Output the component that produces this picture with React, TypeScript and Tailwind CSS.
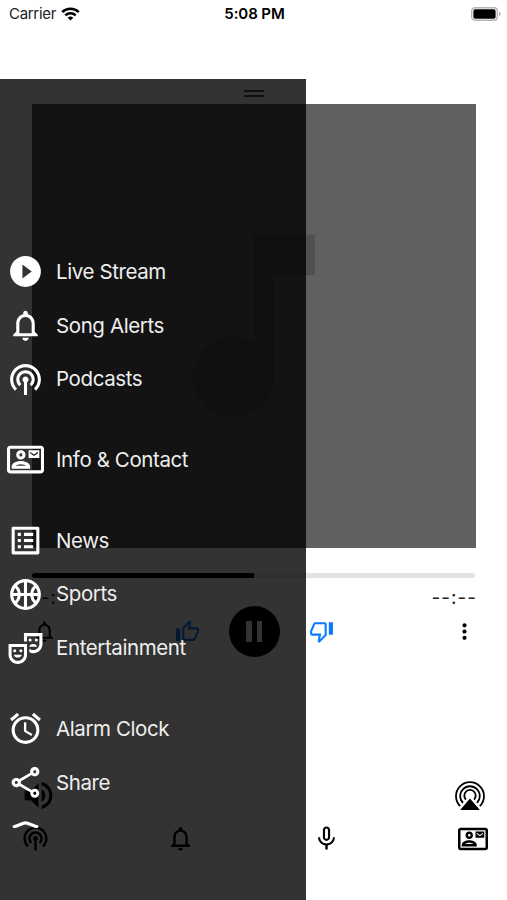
import type { ComponentType } from "react";
import {
  MdAccessAlarm,
  MdMicNone,
  MdMoreVert,
  MdMusicNote,
  MdNotificationsNone,
  MdOutlineListAlt,
  MdOutlineShare,
  MdOutlineSportsBasketball,
  MdOutlineTheaterComedy,
  MdPlayCircleFilled,
  MdPodcasts,
  MdVolumeUp,
} from "react-icons/md";

interface IconProps {
  size?: number;
  className?: string;
}

interface MenuItem {
  label: string;
  icon: ComponentType<IconProps>;
}

function ContactCardIcon({ size = 24, className }: IconProps) {
  return (
    <svg width={size} height={size} viewBox="0 0 24 24" fill="currentColor" className={className}>
      <path d="M22 3H2C.9 3 0 3.9 0 5v14c0 1.1.9 2 2 2h20c1.1 0 2-.9 2-2V5c0-1.1-.9-2-2-2m0 16H2V5h20v14M21 6h-7v5h7V6m-1 2l-2.5 1.75L15 8V7l2.5 1.75L20 7v1M9 12c1.65 0 3-1.35 3-3s-1.35-3-3-3-3 1.35-3 3 1.35 3 3 3m0-4c.55 0 1 .45 1 1s-.45 1-1 1-1-.45-1-1 .45-1 1-1m6 8.59c0-2.5-3.97-3.58-6-3.58s-6 1.08-6 3.58V18h12v-1.41M5.5 16c.72-.5 2.2-1 3.5-1s2.77.5 3.5 1h-7z" />
    </svg>
  );
}

function ThumbIcon({ size = 24, className }: IconProps) {
  return (
    <svg width={size} height={size} viewBox="0 0 24 24" fill="currentColor" className={className}>
      <path d="M5 9v12H1V9h4m4 12a2 2 0 0 1-2-2V9c0-.55.22-1.05.59-1.41L14.17 1l1.06 1.06c.27.27.44.64.44 1.05l-.03.32L14.69 8H21c1.11 0 2 .9 2 2v2c0 .26-.05.5-.14.73l-3.02 7.05C19.54 20.5 18.83 21 18 21H9m0-2h9.03L21 12v-2h-8.79l1.13-5.32L9 9.03V19z" />
    </svg>
  );
}

function AirPlayIcon() {
  return (
    <svg width="32" height="32" viewBox="0 0 32 32" fill="none" stroke="currentColor" strokeWidth="1.8">
      <path d="M6.2 26.2a14 14 0 1 1 19.6 0" />
      <path d="M9 22.9a9.8 9.8 0 1 1 14 0" />
      <path d="M11.9 19.6a5.7 5.7 0 1 1 8.2 0" />
      <path d="M16 18.4l9.4 11.2a.3.3 0 0 1-.2.5H6.8a.3.3 0 0 1-.2-.5z" fill="currentColor" stroke="none" />
    </svg>
  );
}

function WifiIcon() {
  return (
    <svg width="19" height="14" viewBox="0 0 19 14" fill="none" stroke="currentColor" strokeWidth="2.5">
      <path d="M1.2 5.2a12 12 0 0 1 16.6 0" />
      <path d="M4.3 8.4a7.6 7.6 0 0 1 10.4 0" />
      <path d="M9.5 13.6L6.7 10.8a4 4 0 0 1 5.6 0z" fill="currentColor" stroke="none" />
    </svg>
  );
}

function BatteryIcon() {
  return (
    <svg width="31" height="14" viewBox="0 0 31 14">
      <rect x="0.7" y="0.7" width="25.6" height="12.6" rx="3.2" fill="white" stroke="#b4b4b4" strokeWidth="1.4" />
      <rect x="2.4" y="2.2" width="22.2" height="9.6" rx="1.8" fill="black" />
      <path d="M28 4.8c2.2.5 2.2 3.9 0 4.4z" fill="#b0b0b0" />
    </svg>
  );
}

function RoofIcon({ className }: IconProps) {
  return (
    <svg width="37" height="37" viewBox="0 0 37 37" fill="none" stroke="currentColor" strokeWidth="3.2" className={className}>
      <path d="M6 9.3L16.5 5.3Q18.5 4.5 20.5 5.3L31 9.3" />
    </svg>
  );
}

const menuGroups: MenuItem[][] = [
  [
    { label: "Live Stream", icon: MdPlayCircleFilled },
    { label: "Song Alerts", icon: MdNotificationsNone },
    { label: "Podcasts", icon: MdPodcasts },
  ],
  [{ label: "Info & Contact", icon: ContactCardIcon }],
  [
    { label: "News", icon: MdOutlineListAlt },
    { label: "Sports", icon: MdOutlineSportsBasketball },
    { label: "Entertainment", icon: MdOutlineTheaterComedy },
  ],
  [
    { label: "Alarm Clock", icon: MdAccessAlarm },
    { label: "Share", icon: MdOutlineShare },
    { label: "", icon: RoofIcon },
  ],
];

function StatusBar() {
  return (
    <header className="grid h-[27px] grid-cols-3 items-center pl-[9px] pr-[5px]">
      <div className="flex items-center gap-[5px] text-[15px] text-[#222]">
        <span className="pt-[1px] tracking-[-0.3px]">Carrier</span>
        <span className="text-black"><WifiIcon /></span>
      </div>
      <div className="pr-[2px] pt-[1px] text-center text-[15px] font-semibold tracking-[-0.1px]">5:08 PM</div>
      <div className="flex justify-end"><BatteryIcon /></div>
    </header>
  );
}

function Player() {
  return (
    <main className="flex flex-1 flex-col">
      {/* Drag handle */}
      <div className="mt-[63px] flex flex-col items-center gap-[3px]">
        <div className="h-[2px] w-[20px] rounded-full bg-[#484848]" />
        <div className="h-[2px] w-[20px] rounded-full bg-[#484848]" />
      </div>

      <div className="ml-[31.5px] mt-[6.5px] flex size-[444.5px] items-center justify-center bg-[#606060]">
        <MdMusicNote size={244} className="text-[#505050]" />
      </div>

      <div className="mx-[32px] mt-[25px] h-[4.5px] rounded-full bg-[#e4e4e4]">
        <div className="h-full w-1/2 rounded-l-full bg-black" />
      </div>
      <div className="mx-[31px] mt-[7px] flex h-[27px] items-center justify-between text-[19px] tracking-[1px] text-[#222]">
        <span>--:--</span>
        <span className="mr-[-1px]">--:--</span>
      </div>

      {/* Playback controls */}
      <div className="mt-[-6px] flex h-[51px] items-center justify-between pl-[31.5px] pr-[30.5px]">
        <MdNotificationsNone size={25} />
        <div className="flex items-center text-[#0a7aff]">
          <ThumbIcon size={25} className="mr-[29px]" />
          <div className="flex size-[51px] items-center justify-center gap-[5px] rounded-full bg-black">
            <div className="h-[21px] w-[5.5px] bg-white" />
            <div className="h-[21px] w-[5.5px] bg-white" />
          </div>
          <ThumbIcon size={25} className="ml-[29px] rotate-180" />
        </div>
        <MdMoreVert size={25} />
      </div>

      <div className="mt-[120px] flex h-[38px] items-center justify-between pl-[20px] pr-[21px]">
        <MdVolumeUp size={37} />
        <AirPlayIcon />
      </div>
      <nav className="mt-[9px] flex h-[30px] items-center justify-between pl-[20.5px] pr-[19px]">
        <MdPodcasts size={29} />
        <MdNotificationsNone size={29} />
        <MdMicNone size={29} />
        <ContactCardIcon size={30} />
      </nav>
    </main>
  );
}

function Drawer() {
  return (
    <aside className="absolute bottom-0 left-0 top-[79px] w-[306px] bg-black/80 text-white">
      <div className="flex h-[748.5px] flex-col gap-[26.9px] overflow-hidden pt-[165.7px]">
        {menuGroups.map((group, i) => (
          <ul key={i} className="shrink-0">
            {group.map(({ label, icon: Icon }) => (
              <li key={label} className="flex h-[53.8px] items-center gap-[12px] pl-[7px]">
                <Icon size={37} className="shrink-0" />
                <span className="pt-[1px] text-[20.5px] tracking-[-0.4px] text-[#eee]">{label}</span>
              </li>
            ))}
          </ul>
        ))}
      </div>
    </aside>
  );
}

export default function App() {
  return (
    <div className="relative flex h-[900px] w-[507px] flex-col overflow-hidden bg-white font-['Inter',sans-serif] text-black">
      <StatusBar />
      <Player />
      <Drawer />
    </div>
  );
}
